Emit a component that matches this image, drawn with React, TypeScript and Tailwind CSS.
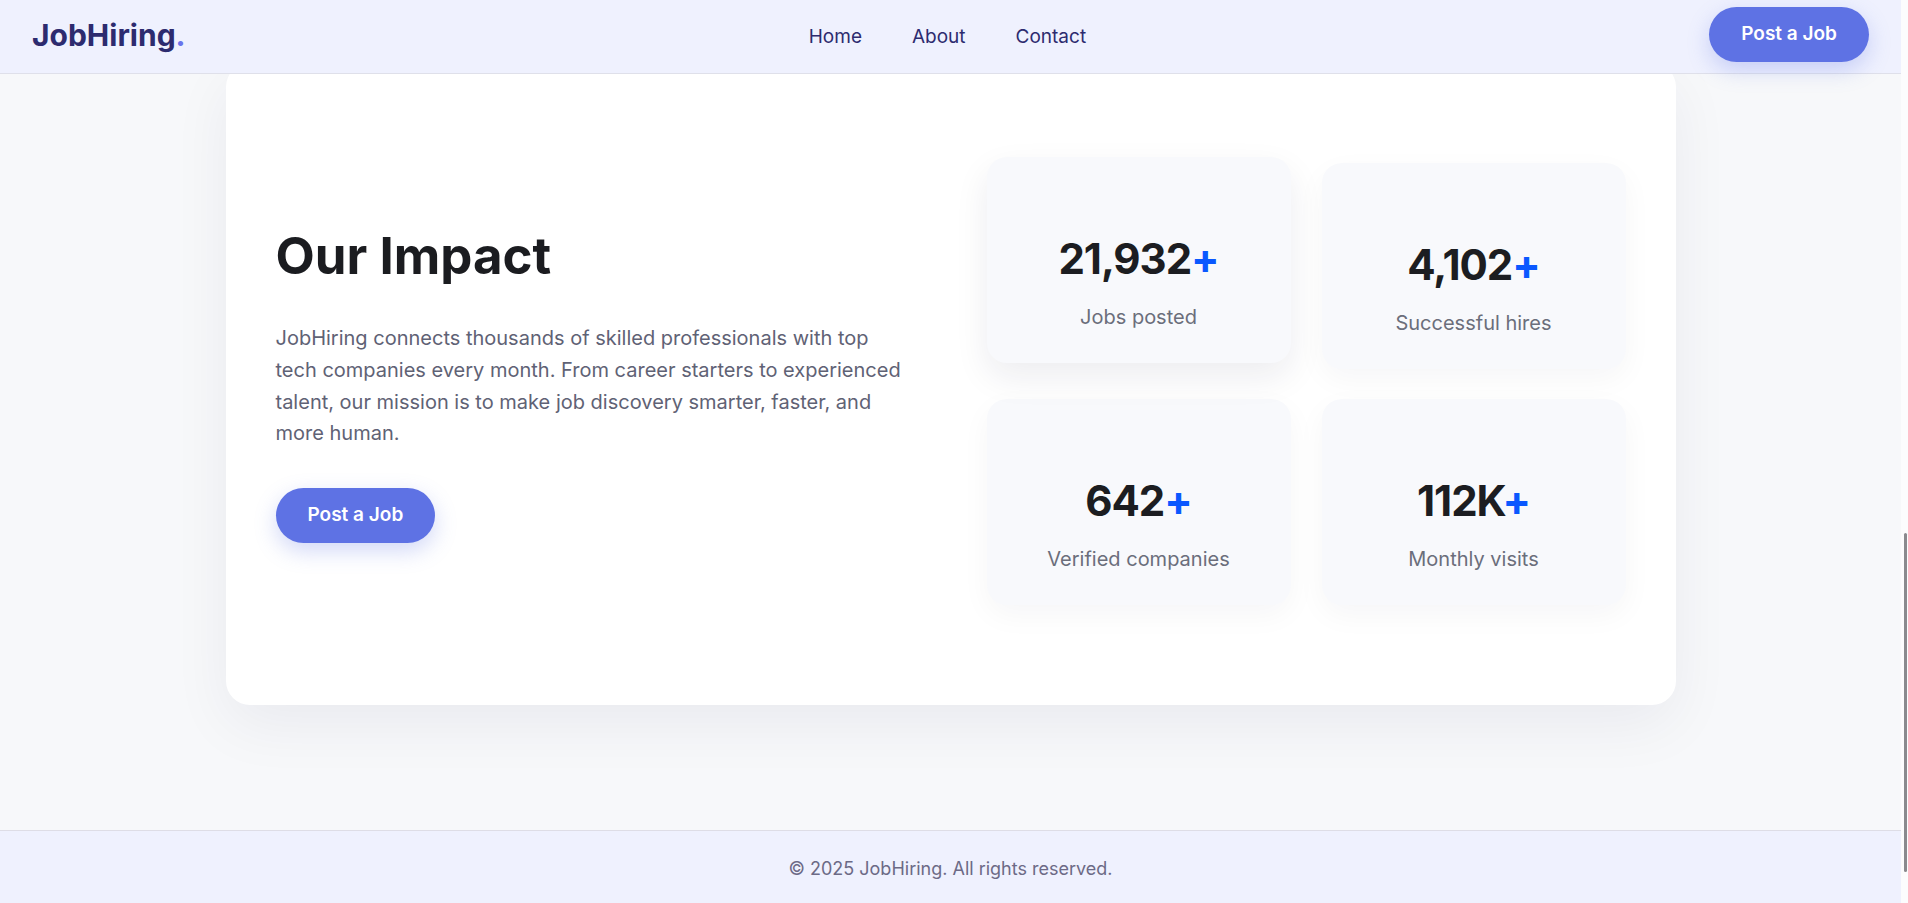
const stats = [
  { metric: "21,932", label: "Jobs posted", active: true },
  { metric: "4,102", label: "Successful hires" },
  { metric: "642", label: "Verified companies" },
  { metric: "112K", label: "Monthly visits" },
];

const navLinks = ["Home", "About", "Contact"];

const PostButton = () => (
  <button className="h-[55px] px-8 rounded-full bg-[#5e72e4] text-white text-[19px] font-semibold shadow-[0_8px_22px_rgba(94,114,228,0.28)]">
    Post a Job
  </button>
);

const App = () => {
  return (
    <div className="flex h-screen bg-[#f7f8fa] font-['Inter',sans-serif]">
      <div className="flex-1 overflow-hidden">
        <header className="relative z-10 h-[74px] pb-1 px-8 flex items-center justify-between bg-[#eff1fe] border-b border-[#dfe0ea]">
          <div className="text-3xl font-bold text-[#2d2b6f]">
            JobHiring<span className="text-[#6a74ec]">.</span>
          </div>
          <nav className="mt-[5px] flex items-center gap-[50px] text-[19px] text-[#2d2b6f]">
            {navLinks.map((link) => (
              <a key={link} href="#">
                {link}
              </a>
            ))}
          </nav>
          <PostButton />
        </header>

        <main className="-mt-[11px] pb-[125px]">
          <section className="max-w-[1450px] mx-auto bg-white rounded-3xl shadow-[0_20px_60px_rgba(20,24,60,0.06)] px-[50px] py-[100px] grid grid-cols-2 gap-[72px] items-center">
            <div>
              <h2 className="text-[51px] leading-[1.2] font-bold text-[#1b1c20] mb-[37px]">
                Our Impact
              </h2>
              <p className="max-w-[630px] text-[20px] leading-[31.7px] text-[#5f6275]">
                JobHiring connects thousands of skilled professionals with top tech
                companies every month. From career starters to experienced talent,
                our mission is to make job discovery smarter, faster, and more human.
              </p>
              <div className="mt-[38px]">
                <PostButton />
              </div>
            </div>

            <div className="grid grid-cols-2 gap-x-[31px] gap-y-[30px]">
              {stats.map((stat) => (
                <div
                  key={stat.label}
                  className={`h-[206px] pt-[76px] rounded-[20px] bg-[#f8f9fc] text-center ${
                    stat.active
                      ? "-translate-y-1.5 shadow-[0_14px_34px_rgba(20,24,60,0.08)]"
                      : "shadow-[0_10px_30px_rgba(20,24,60,0.04)]"
                  }`}
                >
                  <div className="text-[42px] leading-[52px] font-bold tracking-tight text-[#1c1d21]">
                    {stat.metric}
                    <span className="text-[#0a58ff]">+</span>
                  </div>
                  <div className="mt-[17px] text-[20px] leading-[30px] text-[#6b6e7b]">
                    {stat.label}
                  </div>
                </div>
              ))}
            </div>
          </section>
        </main>

        <footer className="border-t border-[#dedde6] bg-[#eff1fe] pt-[24px] pb-[21px] text-center text-[18px] leading-[27px] text-[#6c6a86]">
          © 2025 JobHiring. All rights reserved.
        </footer>
      </div>

      {/* browser scrollbar, scrolled to the bottom */}
      <div className="w-[7px] bg-[#fcfcfd]">
        <div className="mt-[533px] ml-[3px] h-[339px] w-[3px] rounded-full bg-[#8a8a8e]" />
      </div>
    </div>
  );
};

export default App;
